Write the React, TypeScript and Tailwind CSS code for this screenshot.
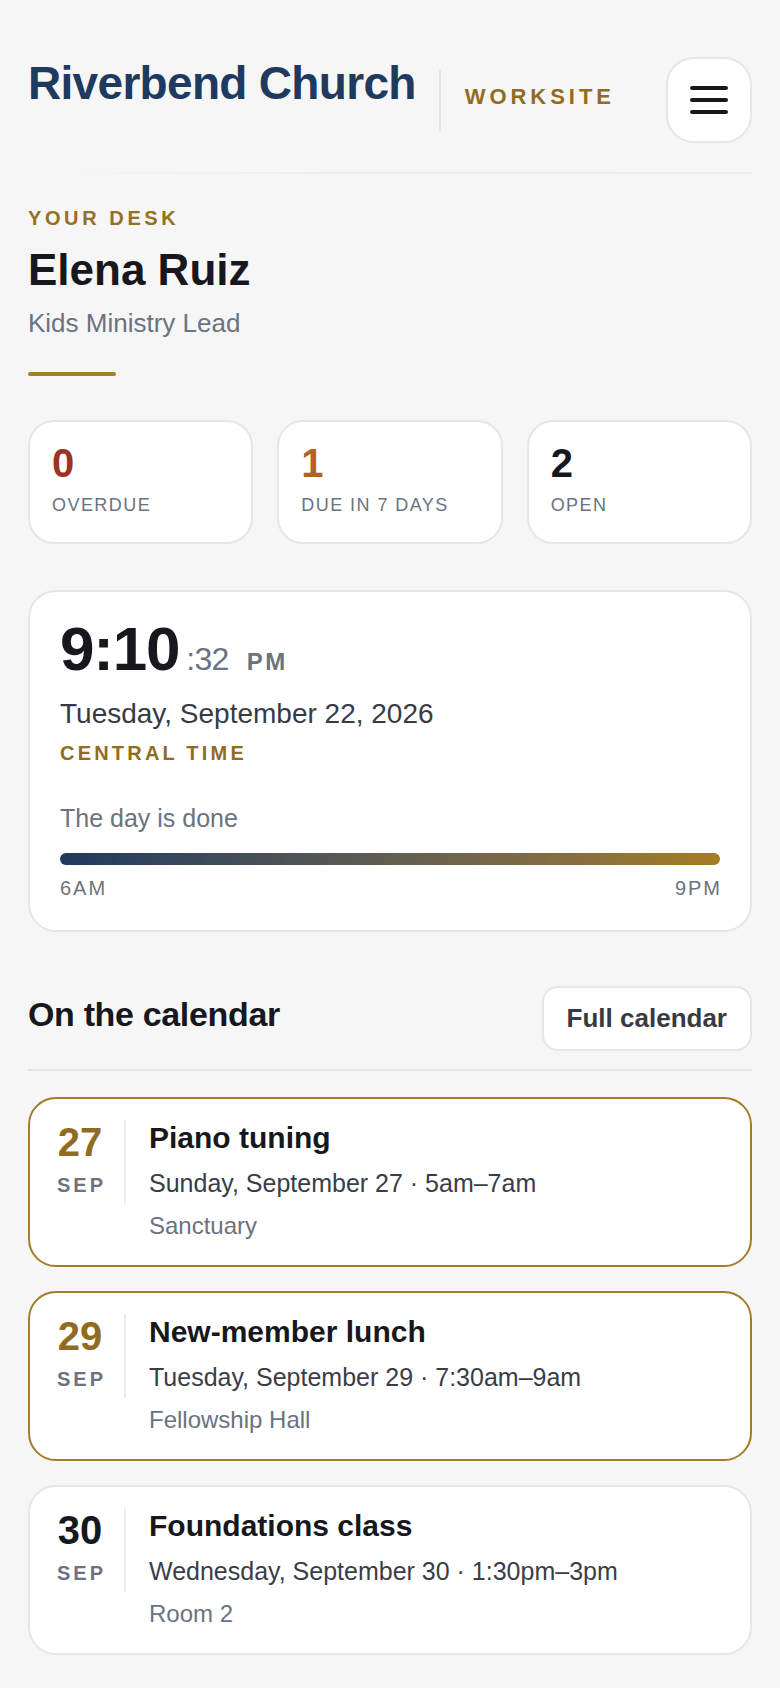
import React from 'react';

const stats = [
    { value: '0', label: 'OVERDUE', color: 'text-[#9a3324]' },
    { value: '1', label: 'DUE IN 7 DAYS', color: 'text-[#b4621c]' },
    { value: '2', label: 'OPEN', color: 'text-[#16181d]' }
];

const events = [
    {
        day: '27',
        title: 'Piano tuning',
        when: 'Sunday, September 27 · 5am–7am',
        where: 'Sanctuary',
        soon: true
    },
    {
        day: '29',
        title: 'New-member lunch',
        when: 'Tuesday, September 29 · 7:30am–9am',
        where: 'Fellowship Hall',
        soon: true
    },
    {
        day: '30',
        title: 'Foundations class',
        when: 'Wednesday, September 30 · 1:30pm–3pm',
        where: 'Room 2',
        soon: false
    }
];

const Header = () => (
    <header className="px-[28px] pt-[57px]">
        <div className="flex items-center justify-between">
            <div className="flex items-center self-stretch">
                <h1 className="self-start mt-[1px] text-[46px] leading-[50px] font-bold tracking-[-0.015em] text-[#1e3a5f]">
                    Riverbend Church
                </h1>
                <div className="ml-[23px] w-[2px] h-[61px] bg-[#e4e4e4]" />
                <span className="ml-[24px] mt-[-6px] text-[22px] leading-none font-bold tracking-[0.18em] text-[#916c20]">
                    WORKSITE
                </span>
            </div>
            <button className="w-[86px] h-[86px] rounded-[28px] bg-white border-2 border-[#e6e6e6] flex flex-col items-center justify-center gap-[8px]">
                <span className="block w-[38px] h-[4px] rounded-full bg-[#16181d]" />
                <span className="block w-[38px] h-[4px] rounded-full bg-[#16181d]" />
                <span className="block w-[38px] h-[4px] rounded-full bg-[#16181d]" />
            </button>
        </div>
        <div className="mt-[29px] h-[2px] bg-linear-to-r from-transparent via-[#ededed] to-[#ebebeb]" />
    </header>
);

const Clock = () => (
    <div className="mt-[46px] bg-white border-2 border-[#e6e6e6] rounded-[28px] px-[30px] pt-[26px] pb-[28px]">
        <div className="flex items-baseline">
            <span className="text-[62px] leading-none font-bold tracking-[-0.02em] text-[#16181d]">9:10</span>
            <span className="ml-[7px] text-[32px] leading-none tracking-[-0.02em] text-[#6b7280]">:32</span>
            <span className="ml-[18px] text-[24px] leading-none font-bold tracking-[0.1em] text-[#6b7280]">PM</span>
        </div>
        <p className="mt-[14px] text-[28px] leading-[39px] text-[#373a44]">Tuesday, September 22, 2026</p>
        <p className="mt-[6px] text-[20px] leading-[28px] font-bold tracking-[0.16em] text-[#916c20]">CENTRAL TIME</p>
        <p className="mt-[34px] text-[25px] leading-[34px] text-[#6b7280]">The day is done</p>
        <div className="mt-[18px] h-[12px] rounded-full bg-linear-to-r from-[#1e3a5f] to-[#a67c22]" />
        <div className="mt-[9px] flex justify-between text-[20px] leading-[28px] tracking-[0.1em] text-[#6b7280]">
            <span>6AM</span>
            <span className="-mr-[2px]">9PM</span>
        </div>
    </div>
);

export default function App() {
    return (
        <div className="min-h-screen bg-[#f6f6f7] font-['Liberation_Sans',Arial,sans-serif] pb-[34px]">
            <Header />

            <main className="px-[28px]">
                <p className="mt-[34px] text-[20px] leading-[20px] font-bold tracking-[0.18em] text-[#956f22]">YOUR DESK</p>
                <h2 className="mt-[18px] text-[44px] leading-[48px] font-bold text-[#16181d]">Elena Ruiz</h2>
                <p className="mt-[11px] text-[26px] leading-[36px] text-[#6b7280]">Kids Ministry Lead</p>
                <div className="mt-[31px] w-[88px] h-[4px] rounded-full bg-[#a47d2a]" />

                <div className="mt-[44px] grid grid-cols-3 gap-[24px]">
                    {stats.map(s => (
                        <div key={s.label} className="bg-white border-2 border-[#e6e6e6] rounded-[26px] px-[22px] pt-[21px] pb-[24px]">
                            <div className={`text-[40px] leading-none font-bold ${s.color}`}>{s.value}</div>
                            <div className="mt-[10px] text-[18px] leading-[25px] tracking-[0.08em] text-[#6b7280]">{s.label}</div>
                        </div>
                    ))}
                </div>

                <Clock />

                <section className="mt-[54px]">
                    <div className="flex items-center justify-between pb-[18px] border-b-2 border-[#e4e4e4]">
                        <h3 className="-mt-[8px] text-[34px] leading-[41px] font-bold tracking-[-0.01em] text-[#16181d]">On the calendar</h3>
                        <button className="bg-white border-2 border-[#e6e6e6] rounded-[16px] px-[23px] py-[15px] text-[26px] leading-[31px] font-bold text-[#373a44]">
                            Full calendar
                        </button>
                    </div>

                    <div className="mt-[26px] flex flex-col gap-[24px]">
                        {events.map(e => (
                            <div
                                key={e.day}
                                className={`flex items-start bg-white border-2 rounded-[28px] pl-[22px] pr-[22px] pt-[21px] pb-[22px] ${e.soon ? 'border-[#a47d2a]' : 'border-[#e6e6e6]'}`}
                            >
                                <div className="w-[74px] shrink-0 pr-[16px] pb-[5px] border-r-2 border-[#ececec] text-center">
                                    <div className={`text-[40px] leading-[44px] font-bold ${e.soon ? 'text-[#916c20]' : 'text-[#16181d]'}`}>{e.day}</div>
                                    <div className="mt-[7px] text-[20px] leading-[28px] font-bold tracking-[0.15em] pl-[3px] text-[#6b7280]">SEP</div>
                                </div>
                                <div className="ml-[23px]">
                                    <div className="text-[30px] leading-[36px] font-bold text-[#16181d]">{e.title}</div>
                                    <div className="mt-[10px] text-[25px] leading-[35px] text-[#3a3d47]">{e.when}</div>
                                    <div className="mt-[8px] text-[24px] leading-[34px] text-[#6b7280]">{e.where}</div>
                                </div>
                            </div>
                        ))}
                    </div>
                </section>
            </main>
        </div>
    );
}
